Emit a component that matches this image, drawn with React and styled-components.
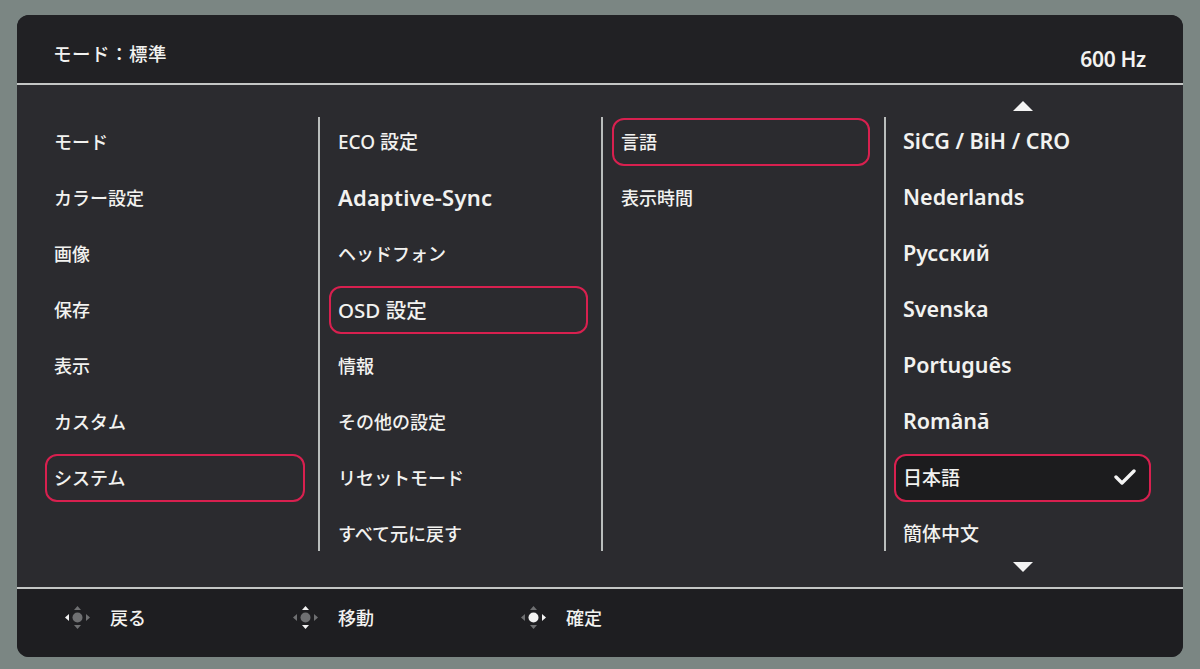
import React from 'react';
import styled, { createGlobalStyle } from 'styled-components';

const GlobalStyle = createGlobalStyle`
  html, body {
    margin: 0;
    padding: 0;
    background: #7b8683;
  }
  body {
    font-family: "Noto Sans", "Noto Sans CJK JP", sans-serif;
  }
`;

const Page = styled.div`
  width: 1200px;
  height: 669px;
  padding: 15px 17px 12px 17px;
  box-sizing: border-box;
  background: #7b8683;
`;

const Panel = styled.div`
  width: 1166px;
  height: 642px;
  border-radius: 12px;
  overflow: hidden;
  display: flex;
  flex-direction: column;
  background: #2b2b2f;
  color: #f2f2f0;
`;

const Header = styled.div`
  height: 70px;
  flex-shrink: 0;
  box-sizing: border-box;
  display: flex;
  align-items: center;
  justify-content: space-between;
  padding: 10px 37px 0 36px;
  background: #212124;
  border-bottom: 2px solid #c4c6c5;
`;

const HeaderText = styled.span`
  font-family: "Noto Sans CJK JP", sans-serif;
  font-size: 18.5px;
  font-weight: 500;
  letter-spacing: 0.5px;
  margin-bottom: 2px;
`;

const Rate = styled.span`
  font-family: "Noto Sans", sans-serif;
  font-size: 21px;
  font-weight: 600;
  letter-spacing: -0.3px;
  margin-top: 10px;
`;

const Body = styled.div`
  flex: 1;
  display: flex;
  align-items: flex-start;
`;

const Column = styled.div`
  width: ${p => p.$width}px;
  flex-shrink: 0;
  display: flex;
  flex-direction: column;
  padding-top: ${p => (p.$top === undefined ? 29 : p.$top)}px;
  padding-left: ${p => p.$left}px;
  box-sizing: border-box;
`;

const Divider = styled.div`
  width: 2px;
  height: 434px;
  margin-top: 32px;
  flex-shrink: 0;
  background: #b9bdbc;
`;

const Row = styled.div`
  width: ${p => p.$w || 259}px;
  height: 48px;
  margin: 4px 0;
  box-sizing: border-box;
  display: flex;
  align-items: center;
  justify-content: space-between;
  padding: 0 13px 3px 7px;
  border: 2px solid ${p => (p.$active ? '#d8204f' : 'transparent')};
  border-radius: 12px;
  background: ${p => (p.$checked ? '#1c1c1e' : 'transparent')};
`;

const Label = styled.span`
  font-family: ${p => (p.$latin ? '"Noto Sans", "Noto Sans CJK JP", sans-serif' : '"Noto Sans CJK JP", sans-serif')};
  font-size: ${p => p.$size || 18}px;
  font-weight: ${p => p.$weight || 500};
  letter-spacing: ${p => p.$ls || 0}px;
  white-space: nowrap;
`;

const ArrowBox = styled.div`
  width: 257px;
  height: ${p => p.$h}px;
  display: flex;
  justify-content: center;
  align-items: ${p => (p.$up ? 'flex-end' : 'flex-start')};
  padding-bottom: ${p => (p.$up ? 3 : 0)}px;
  box-sizing: border-box;
`;

const Footer = styled.div`
  height: 70px;
  flex-shrink: 0;
  box-sizing: border-box;
  display: flex;
  align-items: center;
  padding: 0 0 12px 46px;
  background: #1e1e21;
  border-top: 2px solid #c4c6c5;
`;

const Hint = styled.div`
  width: 228px;
  display: flex;
  align-items: center;
  gap: 18px;
`;

const HintText = styled.span`
  font-family: "Noto Sans CJK JP", sans-serif;
  font-size: 18px;
  font-weight: 500;
`;

const Triangle = ({ up }) => (
  <svg width="20" height="10" viewBox="0 0 20 10">
    <polygon points={up ? '10,0 20,10 0,10' : '0,0 20,0 10,10'} fill="#f4f4f4" />
  </svg>
);

const Check = () => (
  <svg width="22" height="16" viewBox="0 0 22 16">
    <polyline points="2,8 8,14 20,2" fill="none" stroke="#f4f4f4" strokeWidth="3.4" strokeLinecap="round" strokeLinejoin="round" />
  </svg>
);

const Pad = ({ on = [] }) => {
  const c = k => (on.includes(k) ? '#f2f2f2' : '#6f7072');
  return (
    <svg width="29" height="27" viewBox="0 0 29 27">
      <polygon points="14.5,2 18,6 11,6" fill={c('u')} />
      <polygon points="14.5,25 18,21 11,21" fill={c('d')} />
      <polygon points="2,13.5 6,10 6,17" fill={c('l')} />
      <polygon points="27,13.5 23,10 23,17" fill={c('r')} />
      <circle cx="14.5" cy="13.5" r="5" fill={c('c')} />
    </svg>
  );
};

const col1 = ['モード', 'カラー設定', '画像', '保存', '表示', 'カスタム', 'システム'];
const col2 = [
  { t: 'ECO 設定', latin: true, size: 19 },
  { t: 'Adaptive-Sync', latin: true, size: 22, weight: 600, ls: 0.2 },
  { t: 'ヘッドフォン' },
  { t: 'OSD 設定', latin: true, size: 20.5, active: true },
  { t: '情報' },
  { t: 'その他の設定' },
  { t: 'リセットモード' },
  { t: 'すべて元に戻す' },
];
const col3 = ['言語', '表示時間'];
const col4 = [
  { t: 'SiCG / BiH / CRO', latin: true },
  { t: 'Nederlands', latin: true },
  { t: 'Русский', latin: true },
  { t: 'Svenska', latin: true },
  { t: 'Português', latin: true },
  { t: 'Română', latin: true },
  { t: '日本語', active: true, checked: true },
  { t: '簡体中文' },
];

export default function App() {
  return (
    <Page>
      <GlobalStyle />
      <Panel>
        <Header>
          <HeaderText>モード：標準</HeaderText>
          <Rate>600 Hz</Rate>
        </Header>
        <Body>
          <Column $width={301} $left={28}>
            {col1.map((t, i) => (
              <Row key={t} $w={260} $active={i === 6}>
                <Label>{t}</Label>
              </Row>
            ))}
          </Column>
          <Divider />
          <Column $width={281} $left={9}>
            {col2.map(r => (
              <Row key={r.t} $active={r.active}>
                <Label $latin={r.latin} $size={r.size} $weight={r.weight} $ls={r.ls}>{r.t}</Label>
              </Row>
            ))}
          </Column>
          <Divider />
          <Column $width={281} $left={9}>
            {col3.map((t, i) => (
              <Row key={t} $w={258} $active={i === 0}>
                <Label>{t}</Label>
              </Row>
            ))}
          </Column>
          <Divider />
          <Column $width={297} $left={8} $top={0}>
            <ArrowBox $up $h={29}>
              <Triangle up />
            </ArrowBox>
            {col4.map(r => (
              <Row key={r.t} $w={257} $active={r.active} $checked={r.checked}>
                <Label $latin={r.latin} $size={r.latin ? 21.5 : 19} $weight={r.latin ? 600 : 500}>{r.t}</Label>
                {r.checked && <Check />}
              </Row>
            ))}
            <ArrowBox $h={14}>
              <Triangle />
            </ArrowBox>
          </Column>
        </Body>
        <Footer>
          <Hint>
            <Pad on={['l']} />
            <HintText>戻る</HintText>
          </Hint>
          <Hint>
            <Pad on={['u', 'd']} />
            <HintText>移動</HintText>
          </Hint>
          <Hint>
            <Pad on={['c', 'r']} />
            <HintText>確定</HintText>
          </Hint>
        </Footer>
      </Panel>
    </Page>
  );
}
